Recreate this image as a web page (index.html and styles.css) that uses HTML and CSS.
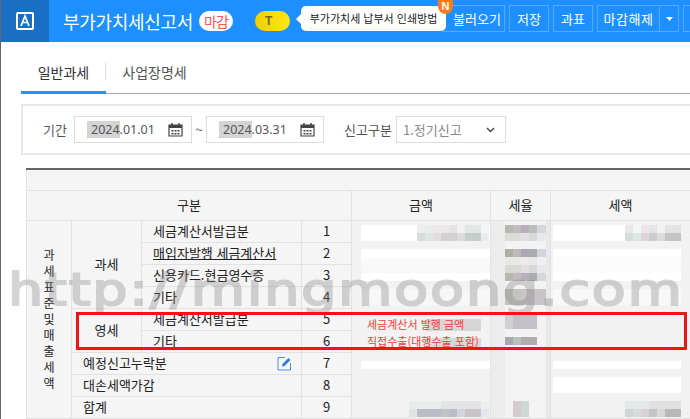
FILE: index.html
```html
<!DOCTYPE html>
<html lang="ko">
<head>
<meta charset="utf-8">
<title>부가가치세신고서</title>
<link rel="stylesheet" href="styles.css">
</head>
<body>
<div class="app">
  <header class="topbar">
    <div class="logo"><svg width="18" height="18" viewBox="0 0 18 18"><rect x="1" y="1" width="16" height="16" rx="1" fill="none" stroke="#fff" stroke-width="2"/><path d="M5 14 9 4l4 10M6.5 10.5h5" fill="none" stroke="#fff" stroke-width="1.7"/></svg></div>
    <h1 class="title">부가가치세신고서</h1>
    <span class="pill">마감</span>
    <span class="talk">T</span>
    <div class="actions">
      <button class="btn btn-load">불러오기</button>
      <button class="btn btn-s">저장</button>
      <button class="btn btn-s">과표</button>
      <div class="split">
        <button class="btn btn-main">마감해제</button>
        <button class="btn btn-caret"><svg width="7" height="4" viewBox="0 0 7 4"><path d="M0 0h7L3.500 4z" fill="#fff"/></svg></button>
      </div>
      <button class="btn btn-s"></button>
    </div>
    <div class="tip">부가가치세 납부서 인쇄방법</div>
    <span class="badge">N</span>
  </header>

  <nav class="tabs">
    <a class="tab tab-on">일반과세</a>
    <a class="tab">사업장명세</a>
  </nav>

  <section class="filter">
    <span class="lbl">기간</span>
    <div class="date"><span class="val"><mark>2024</mark>.01.01</span>
      <svg class="cal" width="15" height="15" viewBox="0 0 15 15"><path d="M1 3h13v11H1z" fill="none" stroke="#444" stroke-width="1.200"/><path d="M1 3h13v3H1z" fill="#444"/><path d="M4 1v3M11 1v3" stroke="#444" stroke-width="1.500"/><path d="M3.500 8h2v1.500h-2zM6.500 8h2v1.500h-2zM9.500 8h2v1.500h-2zM3.500 11h2v1.500h-2zM6.500 11h2v1.500h-2zM9.500 11h2v1.500h-2z" fill="#444"/></svg></div>
    <span class="tilde">~</span>
    <div class="date"><span class="val"><mark>2024</mark>.03.31</span>
      <svg class="cal" width="15" height="15" viewBox="0 0 15 15"><path d="M1 3h13v11H1z" fill="none" stroke="#444" stroke-width="1.200"/><path d="M1 3h13v3H1z" fill="#444"/><path d="M4 1v3M11 1v3" stroke="#444" stroke-width="1.500"/><path d="M3.500 8h2v1.500h-2zM6.500 8h2v1.500h-2zM9.500 8h2v1.500h-2zM3.500 11h2v1.500h-2zM6.500 11h2v1.500h-2zM9.500 11h2v1.500h-2z" fill="#444"/></svg></div>
    <span class="lbl lbl-2">신고구분</span>
    <div class="select"><span>1.정기신고</span>
      <svg width="9" height="6" viewBox="0 0 9 6"><path d="M1 1l3.500 3.500L8 1" fill="none" stroke="#444" stroke-width="1.400"/></svg></div>
  </section>

  <table class="grid">
    <colgroup><col class="c1"><col class="c2"><col class="c3"><col class="c4"><col class="c5"><col class="c6"><col class="c7"></colgroup>
    <tr class="r-blank"><td colspan="7"></td></tr>
    <tr class="r-head"><th colspan="4">구분</th><th>금액</th><th>세율</th><th>세액</th></tr>
    <tr>
      <td rowspan="9" class="ctr vert">과<br>세<br>표<br>준<br>및<br>매<br>출<br>세<br>액</td>
      <td rowspan="4" class="ctr">과세</td>
      <td>세금계산서발급분</td><td class="ctr">1</td>
      <td rowspan="9" class="blur amt"></td><td rowspan="9" class="blur rate"></td><td rowspan="9" class="blur tax"></td>
    </tr>
    <tr><td class="und">매입자발행 세금계산서</td><td class="ctr">2</td></tr>
    <tr><td>신용카드.현금영수증</td><td class="ctr">3</td></tr>
    <tr><td>기타</td><td class="ctr">4</td></tr>
    <tr><td rowspan="2" class="ctr">영세</td><td>세금계산서발급분</td><td class="ctr">5</td></tr>
    <tr><td>기타</td><td class="ctr">6</td></tr>
    <tr><td colspan="2"><div class="withicon"><span>예정신고누락분</span>
      <svg width="15" height="15" viewBox="0 0 15 15"><path d="M8 1.500H1v12.500h12.500V7" fill="none" stroke="#4a90e2"/><path d="M5 10.500l.5-2.500 6-6 2 2-6 6z" fill="#2a7fe0"/></svg></div></td><td class="ctr">7</td></tr>
    <tr><td colspan="2">대손세액가감</td><td class="ctr">8</td></tr>
    <tr><td colspan="2">합계</td><td class="ctr">9</td></tr>
  </table>

  <div class="watermark">http://mingmoong.com</div>
  <div class="redbox">
    <p>세금계산서 발행 금액</p>
    <p>직접수출(대행수출 포함)</p>
  </div>
</div>
</body>
</html>
```
FILE: styles.css
```css
* { box-sizing: border-box; }
html, body { margin: 0; padding: 0; background: #fff; }
.app {
  position: relative; width: 690px; height: 419px; overflow: hidden; background: #fff;
  font-family: "Noto Sans CJK KR", "Noto Sans", sans-serif; color: #222;
  border-left: 1px solid #666;
}
.topbar {
  position: relative; display: flex; align-items: center; height: 42px; margin-left: -1px;
  background: #1e8fff; color: #fff;
}
.logo { flex: none; width: 49px; height: 42px; background: #1a6ec4; display: flex; align-items: center; justify-content: center; }
.title { margin: 0 0 0 14px; flex: none; font-size: 18px; line-height: 42px; font-weight: 400; width: 136px; white-space: nowrap; letter-spacing: -.3px; }
.pill { flex: none; width: 34px; height: 20px; border-radius: 10px; background: #fff; color: #f2525a; font-size: 14px; line-height: 20px; text-align: center; letter-spacing: -1px; }
.talk { flex: none; margin-left: 22px; width: 35px; height: 20px; border-radius: 10px; background: linear-gradient(90deg, #f0d000, #ffe614); color: #7a6a00; font-size: 12px; font-weight: 700; line-height: 20px; padding-left: 10px; font-family: "Liberation Sans", sans-serif; }
.actions { flex: none; display: flex; gap: 4px; margin-left: 153px; padding-top: 5px; align-self: flex-start; height: 32px; }
.btn { flex: none; height: 27px; padding: 0; margin: 0; border: 1px solid #55aaff; background: #1e8fff; color: #fff; font: 13px/25px "Noto Sans CJK KR", sans-serif; }
.btn-load { width: 62px; padding-left: 6px; }
.btn-s { width: 40px; }
.split { display: flex; flex: none; border: 1px solid #55aaff; height: 27px; }
.split .btn { height: 25px; border: 0; }
.btn-main { width: 62px; border-right: 1px solid #55aaff !important; letter-spacing: .6px; }
.btn-caret { width: 18px; display: flex; align-items: center; justify-content: center; }
.tip {
  position: absolute; left: 301px; top: 6px; width: 145px; height: 25px; border-radius: 5px; background: #fff; color: #222;
  font-size: 11px; line-height: 25px; text-align: center; white-space: nowrap;
}
.tip::before { content: ""; position: absolute; left: -5px; top: 8px; border: 5px solid transparent; border-left: 0; border-right-color: #fff; }
.badge { position: absolute; left: 438px; top: 0; width: 15px; height: 14px; border-radius: 0 0 8px 8px; background: #ff7a14; color: #fff; font: 700 11px/13px "Liberation Sans", sans-serif; text-align: center; }

.tabs { display: flex; height: 52px; margin-left: 20px; border-bottom: 1px solid #a8a8a8; align-items: flex-end; }
.tab { position: relative; width: 85px; height: 41px; padding-top: 10px; font-size: 14px; line-height: 20px; text-align: center; color: #555; }
.tab + .tab { width: 97px; }
.tab-on { color: #333; }
.tab-on::after { content: ""; position: absolute; left: 0; right: 0; bottom: -1px; height: 3px; background: #1e96ff; }
.tab-on::before { content: ""; position: absolute; right: 0; top: 11px; width: 1px; height: 17px; background: #ddd; }

.filter { display: flex; align-items: center; height: 51px; margin: 10px 0 0 20px; padding-left: 20px; border: 2px solid #e8e8e8; border-right: 0; font-size: 12px; color: #555; white-space: nowrap; }
.lbl { flex: none; width: 31px; font-size: 13px; }
.lbl-2 { width: 52px; margin-left: 20px; }
.date { flex: none; display: flex; align-items: center; justify-content: space-between; width: 118px; height: 27px; padding: 0 8px 0 12px; border: 1px solid #ddd; }
.val { font: 12.500px/15px "Noto Sans", sans-serif; color: #555; }
mark { background: #d4d4d4; color: #555; padding: 0 0 0 4px; }
.cal { flex: none; }
.tilde { flex: none; width: 14px; text-align: center; font-size: 13px; }
.select { flex: none; display: flex; align-items: center; justify-content: space-between; width: 110px; height: 27px; padding: 0 10px 0 6px; border: 1px solid #ddd; font-size: 13px; color: #888; }

.grid { border-collapse: collapse; table-layout: fixed; width: 664px; margin: 13px 0 0 25px; background: #f5f5f5; border-top: 2px solid #666; font-size: 13px; color: #222; }
.c1 { width: 45px; } .c2 { width: 70px; } .c3 { width: 160px; } .c4 { width: 50px; } .c5 { width: 139px; } .c6 { width: 60px; } .c7 { width: 140px; }
.grid td, .grid th { height: 22px; padding: 0 0 0 11px; border: 1px solid #e2e2e2; font-weight: 400; line-height: 18px; white-space: nowrap; }
.grid th { padding: 0; text-align: center; }
.r-blank td { height: 21px; padding: 0; }
.r-head th { height: 30px; }
.grid .ctr { padding: 0; text-align: center; }
.grid .vert { line-height: 16px; font-size: 12px; }
.und { text-decoration: underline; }
.withicon { display: flex; justify-content: space-between; align-items: center; padding-right: 9px; }
.grid .blur { padding: 0; background-repeat: no-repeat; }
.amt {
  background-color: #f2f2f2;
  background-image:
    linear-gradient(90deg, #d8dcda 0 8px, #dfe6e4 8px 16px, #e2dee0 16px 24px, #d4d0d2 24px 40px, #dcdcdc 40px 48px, #c4cccc 48px 64px, #e8ecee 64px),
    linear-gradient(90deg, #eceeec 0 8px, #e8eeec 8px 16px, #ece8ea 16px 32px, #e4e4e4 32px 40px, #f0f0f0 40px 48px, #e2e6e4 48px 64px, #f4f6f6 64px),
    linear-gradient(90deg, #dfe4e4 0 8px, #bcbcc4 8px 24px, #b8bcc8 24px 32px, #c0c4c4 32px 40px, #b8bcc8 40px 48px, #d4d4dc 48px 56px, #c8c4c8 56px 72px, #e4e8ee 72px),
    linear-gradient(90deg, #e8ecec 0 32px, #e4e4e4 32px 72px, #eeeeee 72px),
    linear-gradient(#d6d6d6, #d6d6d6), linear-gradient(#d8d8d8, #d8d8d8),
    linear-gradient(#fff, #fff), linear-gradient(#fff, #fff), linear-gradient(#fafafa, #fafafa), linear-gradient(#f8f8f8, #f8f8f8), linear-gradient(#fff, #fff), linear-gradient(#f7f7f7, #f7f7f7), linear-gradient(#fff, #fff);
  background-size: 72px 8px, 72px 8px, 80px 8px, 80px 8px, 55px 12px, 55px 12px, 130px 16px, 130px 8px, 130px 8px, 130px 8px, 130px 8px, 130px 16px, 130px 8px;
  background-position: 65px 12px, 65px 4px, 57px 188px, 57px 180px, 74px 98px, 74px 117px, 9px 4px, 9px 28px, 9px 36px, 9px 44px, 9px 52px, 9px 68px, 9px 140px;
}
.rate {
  background-color: #f3f3f3;
  background-image:
    linear-gradient(90deg, #b8b8b0 0 8px, #c0bcc0 8px 16px, #b8aebc 16px 24px, #bcbcbc 24px 32px, #d4d8dc 32px),
    linear-gradient(90deg, #dcdcd6 0 16px, #e2dee2 16px 24px, #d8d8d8 24px 32px, #e8e8ec 32px),
    linear-gradient(90deg, #b0b0a0 0 8px, #bcb8bc 8px 16px, #b0a4b8 16px 24px, #acacac 24px 32px, #d0d4dc 32px),
    linear-gradient(90deg, #e8e8e4 0 16px, #eeeaec 16px 24px, #e8e8e8 24px 32px, #f0f0f4 32px),
    linear-gradient(90deg, #d8d8d4 0 16px, #e2dee2 16px 24px, #d8d8d8 24px 32px, #e8e8ec 32px),
    linear-gradient(90deg, #b8b8b0 0 8px, #c0bcc0 8px 16px, #b8aebc 16px 24px, #acacb0 24px 32px, #d4d8dc 32px),
    linear-gradient(90deg, #c4c4be 0 16px, #c8c4c8 16px 32px),
    linear-gradient(90deg, #d0d0d4 0 8px, #c4c0c8 8px 32px),
    linear-gradient(90deg, #a8a8ac 0 8px, #b8c0bc 8px 16px, #b0acb0 16px 32px),
    linear-gradient(90deg, #d4cccc 0 8px, #ccd8d4 8px),
    linear-gradient(90deg, #ececec 0 14px, transparent 14px 55px, #e8e8e8 55px);
  background-size: 41px 8px, 41px 8px, 41px 8px, 41px 8px, 41px 8px, 41px 8px, 41px 16px, 32px 14px, 32px 8px, 16px 16px, 100% 100%;
  background-position: 14px 4px, 14px 12px, 14px 28px, 14px 36px, 14px 44px, 14px 52px, 14px 68px, 14px 94px, 14px 116px, 22px 180px, 0 0;
}
.tax {
  background-color: #f2f2f2;
  background-image:
    linear-gradient(90deg, #d4dedc 0 8px, #dce8e4 8px 16px, #e0d4dc 16px 24px, #ccc 24px 32px, #dcdcdc 32px 40px, #c4c4c4 40px 56px),
    linear-gradient(90deg, #e8eaea 0 8px, #f4f6f8 8px 16px, #eee4ea 16px 24px, #e4e4e4 24px 32px, #f0f0f0 32px 40px, #e4e4e6 40px 56px),
    linear-gradient(90deg, #d0d4d4 0 8px, #d4dedc 8px 16px, #dcd0d8 16px 24px, #c4c4c4 24px 32px, #d8d8d8 32px 40px, #b8b8b8 40px 56px),
    linear-gradient(90deg, #e4e8e8 0 24px, #e0e0e0 24px 56px),
    linear-gradient(#fff, #fff), linear-gradient(#fff, #fff), linear-gradient(#fcfcfc, #fcfcfc), linear-gradient(#fff, #fff), linear-gradient(#f8f8f8, #f8f8f8), linear-gradient(#fff, #fff), linear-gradient(#fff, #fff);
  background-size: 56px 8px, 56px 8px, 56px 8px, 56px 8px, 128px 16px, 128px 8px, 128px 16px, 128px 8px, 128px 16px, 128px 8px, 128px 16px;
  background-position: 74px 12px, 74px 4px, 74px 188px, 74px 180px, 2px 4px, 2px 28px, 2px 36px, 2px 52px, 2px 68px, 2px 140px, 2px 156px;
}

.watermark { position: absolute; left: 7px; top: 260px; font: 400 44px/60px "DejaVu Sans", sans-serif; color: #808080; -webkit-text-stroke: 2px #808080; opacity: .33; letter-spacing: 1.500px; white-space: nowrap; transform: scaleX(1.26); transform-origin: 0 50%; filter: blur(.6px); pointer-events: none; }
.redbox { position: absolute; left: 75px; top: 312px; width: 611px; height: 38px; border: 3px solid #f01414; padding: 1px 0 0 288px; color: #f23c3c; font-size: 11px; line-height: 17px; }
.redbox p { margin: 0; white-space: nowrap; }
```
